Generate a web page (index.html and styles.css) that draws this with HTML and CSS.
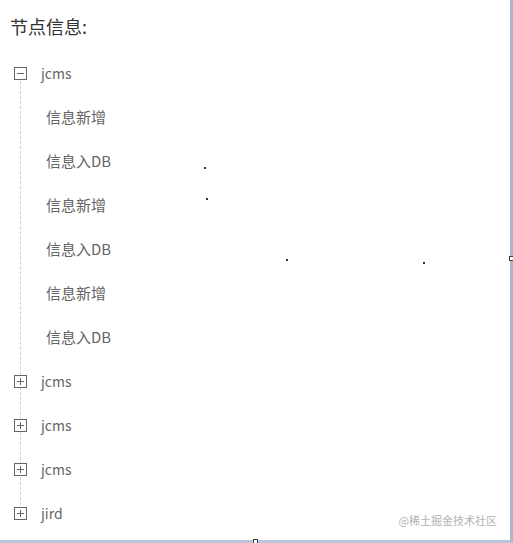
FILE: index.html
```html
<!DOCTYPE html>
<html lang="zh-CN">
<head>
    <meta charset="UTF-8">
    <title>节点信息</title>
    <link rel="stylesheet" href="styles.css">
</head>
<body>
    <div class="frame">
        <h2 class="title">节点信息:</h2>

        <ul class="tree">
            <li class="node">
                <div class="row">
                    <svg class="toggle" width="13" height="13" viewBox="0 0 13 13">
                        <rect x="0.5" y="0.5" width="12" height="12" fill="#fff" stroke="#666"/>
                        <path d="M3 6.5h7" stroke="#666"/>
                    </svg>
                    <span class="label">jcms</span>
                </div>
                <ul class="children">
                    <li class="leaf">信息新增</li>
                    <li class="leaf">信息入DB</li>
                    <li class="leaf">信息新增</li>
                    <li class="leaf">信息入DB</li>
                    <li class="leaf">信息新增</li>
                    <li class="leaf">信息入DB</li>
                </ul>
            </li>
            <li class="node">
                <div class="row">
                    <svg class="toggle" width="13" height="13" viewBox="0 0 13 13">
                        <rect x="0.5" y="0.5" width="12" height="12" fill="#fff" stroke="#666"/>
                        <path d="M3 6.5h7M6.5 3v7" stroke="#666"/>
                    </svg>
                    <span class="label">jcms</span>
                </div>
            </li>
            <li class="node">
                <div class="row">
                    <svg class="toggle" width="13" height="13" viewBox="0 0 13 13">
                        <rect x="0.5" y="0.5" width="12" height="12" fill="#fff" stroke="#666"/>
                        <path d="M3 6.5h7M6.5 3v7" stroke="#666"/>
                    </svg>
                    <span class="label">jcms</span>
                </div>
            </li>
            <li class="node">
                <div class="row">
                    <svg class="toggle" width="13" height="13" viewBox="0 0 13 13">
                        <rect x="0.5" y="0.5" width="12" height="12" fill="#fff" stroke="#666"/>
                        <path d="M3 6.5h7M6.5 3v7" stroke="#666"/>
                    </svg>
                    <span class="label">jcms</span>
                </div>
            </li>
            <li class="node">
                <div class="row">
                    <svg class="toggle" width="13" height="13" viewBox="0 0 13 13">
                        <rect x="0.5" y="0.5" width="12" height="12" fill="#fff" stroke="#666"/>
                        <path d="M3 6.5h7M6.5 3v7" stroke="#666"/>
                    </svg>
                    <span class="label">jird</span>
                </div>
            </li>
        </ul>

        <!-- stray specks on the screenshot -->
        <i class="speck" style="left:204px;top:167px"></i>
        <i class="speck" style="left:206px;top:198px"></i>
        <i class="speck" style="left:286px;top:259px"></i>
        <i class="speck" style="left:423px;top:262px"></i>

        <span class="watermark">@稀土掘金技术社区</span>
        <i class="handle handle-right"></i>
        <i class="handle handle-bottom"></i>
    </div>
</body>
</html>
```

FILE: styles.css
```css
html, * {
    box-sizing: border-box;
    margin: 0;
    padding: 0;
}

body {
    background: #fff;
    font-family: "Noto Sans CJK SC", "Noto Sans", sans-serif;
    width: 513px;
    height: 543px;
    overflow: hidden;
}

.frame {
    position: relative;
    width: 513px;
    height: 543px;
    border-right: 3px solid #aab6cc;
    border-bottom: 3px solid #b9c5da;
    padding: 13px 0 0 10px;
}

.title {
    font-size: 18px;
    font-weight: normal;
    line-height: 26px;
    color: #333;
    height: 38px;
}

.tree {
    position: relative;
    list-style: none;
    margin-left: 4px;
}

.tree::before {
    content: "";
    position: absolute;
    left: 6px;
    top: 30px;
    bottom: 30px;
    border-left: 1px dashed #d0d0d0;
}

.row {
    height: 44px;
    display: flex;
    align-items: center;
    gap: 14px;
}

.toggle {
    position: relative;
    display: block;
    flex: none;
}

.label {
    font-size: 14px;
    color: #666;
}

.children {
    list-style: none;
    padding-left: 32px;
}

.leaf {
    font-size: 15px;
    color: #666;
    height: 44px;
    line-height: 44px;
}

.speck {
    position: absolute;
    width: 2px;
    height: 2px;
    background: #333;
}

.watermark {
    position: absolute;
    right: 13px;
    bottom: 12px;
    font-size: 11px;
    color: #b3b3b3;
}

.handle {
    position: absolute;
    width: 5px;
    height: 5px;
    background: #fff;
    border: 1px solid #444;
}

.handle-right {
    right: -4px;
    top: 256px;
}

.handle-bottom {
    left: 253px;
    bottom: -4px;
}
```
